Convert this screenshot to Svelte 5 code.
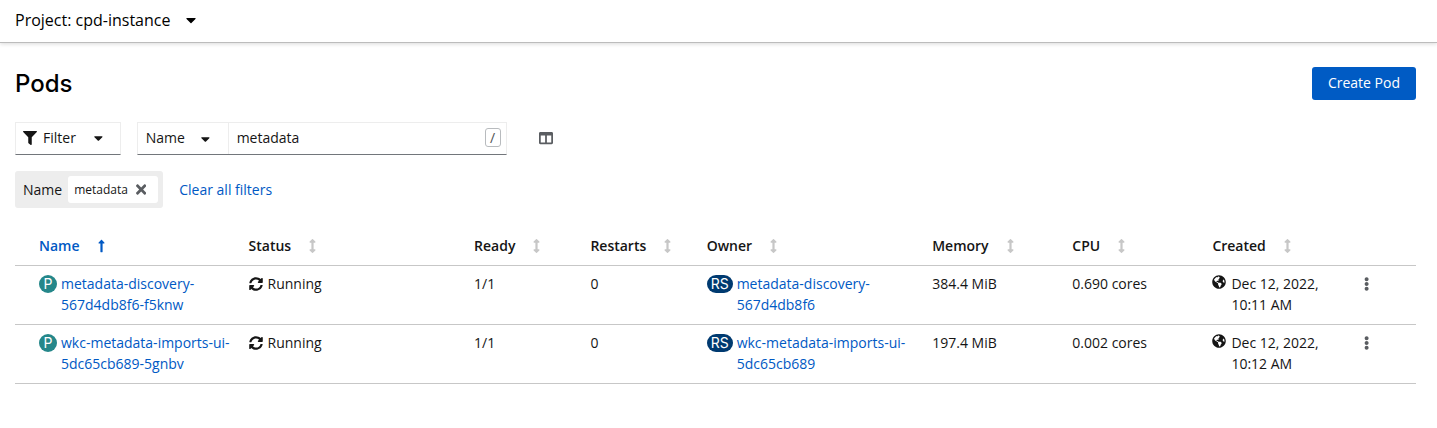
<script>
  const icons = {
    caret: [320, 'M31.3 192h257.3c17.8 0 26.7 21.5 14.1 34.1L174.1 354.8c-7.8 7.8-20.5 7.8-28.3 0L17.2 226.1C4.6 213.5 13.5 192 31.3 192z'],
    filter: [512, 'M487.976 0H24.028C2.71 0-8.047 25.866 7.058 40.971L192 225.941V432c0 7.831 3.821 15.17 10.237 19.662l80 55.98C298.02 518.69 320 507.493 320 487.98V225.941l184.947-184.97C520.021 25.896 509.338 0 487.976 0z'],
    times: [352, 'M242.72 256l100.07-100.07c12.28-12.28 12.28-32.19 0-44.48l-22.24-22.24c-12.28-12.28-32.19-12.28-44.48 0L176 189.28 75.93 89.21c-12.28-12.28-32.19-12.28-44.48 0L9.21 111.45c-12.28 12.28-12.28 32.19 0 44.48L109.28 256 9.21 356.07c-12.28 12.28-12.28 32.19 0 44.48l22.24 22.24c12.28 12.28 32.2 12.28 44.48 0L176 322.72l100.07 100.07c12.28 12.28 32.2 12.28 44.48 0l22.24-22.24c12.28-12.28 12.28-32.19 0-44.48L242.72 256z'],
    kebab: [192, 'M96 184c39.8 0 72 32.2 72 72s-32.2 72-72 72-72-32.2-72-72 32.2-72 72-72zM24 80c0 39.8 32.2 72 72 72s72-32.2 72-72S135.8 8 96 8 24 40.2 24 80zm0 352c0 39.8 32.2 72 72 72s72-32.2 72-72-32.2-72-72-72-72 32.2-72 72z'],
    columns: [512, 'M464 32H48C21.49 32 0 53.49 0 80v352c0 26.51 21.49 48 48 48h416c26.51 0 48-21.49 48-48V80c0-26.51-21.49-48-48-48zM224 416H64V160h160v256zm224 0H288V160h160v256z'],
    up: [256, 'M88 166.059V468c0 6.627 5.373 12 12 12h56c6.627 0 12-5.373 12-12V166.059h46.059c21.382 0 32.09-25.851 16.971-40.971l-86.059-86.059c-9.373-9.373-24.569-9.373-33.941 0l-86.059 86.059c-15.119 15.119-4.411 40.971 16.971 40.971H88z'],
    both: [256, 'M214.059 377.941H168V134.059h46.059c21.382 0 32.09-25.851 16.971-40.971L144.971 7.029c-9.373-9.373-24.568-9.373-33.941 0L24.971 93.088c-15.119 15.119-4.411 40.971 16.971 40.971H88v243.882H41.941c-21.382 0-32.09 25.851-16.971 40.971l86.059 86.059c9.373 9.373 24.568 9.373 33.941 0l86.059-86.059c15.12-15.119 4.412-40.971-16.97-40.971z'],
    sync: [512, 'M370.72 133.28C339.458 104.008 298.888 87.962 255.848 88c-77.458.068-144.328 53.178-162.791 126.85-1.344 5.363-6.122 9.15-11.651 9.15H24.103c-7.498 0-13.194-6.807-11.807-14.176C33.933 94.924 134.813 8 256 8c66.448 0 126.791 26.136 171.315 68.685L463.03 40.97C478.149 25.851 504 36.559 504 57.941V192c0 13.255-10.745 24-24 24H345.941c-21.382 0-32.09-25.851-16.971-40.971l41.75-41.749zM32 296h134.059c21.382 0 32.09 25.851 16.971 40.971l-41.75 41.75c31.262 29.273 71.835 45.319 114.876 45.28 77.418-.07 144.315-53.144 162.787-126.849 1.344-5.363 6.122-9.15 11.651-9.15h57.304c7.498 0 13.194 6.807 11.807 14.176C478.067 417.076 377.187 504 256 504c-66.448 0-126.791-26.136-171.315-68.685L48.97 471.03C33.851 486.149 8 475.441 8 454.059V320c0-13.255 10.745-24 24-24z'],
    globe: [496, 'M248 8C111.03 8 0 119.03 0 256s111.03 248 248 248 248-111.03 248-248S384.97 8 248 8zm82.29 357.6c-3.9 3.88-7.99 7.95-11.31 11.28-2.99 3-5.1 6.7-6.17 10.71-1.51 5.66-2.73 11.38-4.77 16.87l-17.39 46.85c-13.76 3-28 4.69-42.65 4.69v-27.38c1.69-12.62-7.64-36.26-22.63-51.25-6-6-9.37-14.14-9.37-22.63v-32.01c0-11.64-6.27-22.34-16.46-27.97-14.37-7.95-34.81-19.06-48.81-26.11-11.48-5.78-22.1-13.14-31.65-21.75l-.8-.72a114.792 114.792 0 0 1-18.06-20.74c-9.38-13.77-24.66-36.42-34.59-51.14 20.47-45.5 57.36-82.04 103.2-101.89l24.01 12.01C203.48 89.74 216 82.01 216 70.11v-11.3c7.99-1.29 16.12-2.11 24.39-2.42l28.3 28.3c6.25 6.25 6.25 16.38 0 22.63L264 112l-10.34 10.34c-3.12 3.12-3.12 8.19 0 11.31l4.69 4.69c3.12 3.12 3.12 8.19 0 11.31l-8 8a8.008 8.008 0 0 1-5.66 2.34h-8.99c-2.08 0-4.08.81-5.58 2.27l-9.92 9.65a8.008 8.008 0 0 0-1.58 9.31l15.59 31.19c2.66 5.32-1.21 11.58-7.15 11.58h-5.64c-1.93 0-3.79-.7-5.24-1.96l-9.28-8.06a16.017 16.017 0 0 0-15.55-3.1l-31.17 10.39a11.95 11.95 0 0 0-8.17 11.34c0 4.53 2.56 8.66 6.61 10.69l11.08 5.54c9.41 4.71 19.79 7.16 30.31 7.16s22.59 27.29 32 32h66.75c8.49 0 16.62 3.37 22.63 9.37l13.69 13.69a30.503 30.503 0 0 1 8.93 21.57 46.536 46.536 0 0 1-13.72 32.98zM417 274.25c-5.79-1.45-10.84-5-14.15-9.97l-17.98-26.97a23.97 23.97 0 0 1 0-26.62l19.59-29.38c2.32-3.47 5.5-6.29 9.24-8.15l12.98-6.49C440.2 193.59 448 223.87 448 256c0 8.67-.74 17.16-1.82 25.54L417 274.25z'],
  };

  const columns = [
    { label: 'Name', size: 'wide' },
    { label: 'Status', size: 'wide' },
    { label: 'Ready', size: 'narrow' },
    { label: 'Restarts', size: 'narrow' },
    { label: 'Owner', size: 'wide' },
    { label: 'Memory', size: 'medium' },
    { label: 'CPU', size: 'medium' },
    { label: 'Created', size: 'medium' },
  ];

  const pods = [
    { name: ['metadata-discovery-', '567d4db8f6-f5knw'], owner: ['metadata-discovery-', '567d4db8f6'], memory: '384.4 MiB', cpu: '0.690 cores', created: ['Dec 12, 2022,', '10:11 AM'] },
    { name: ['wkc-metadata-imports-ui-', '5dc65cb689-5gnbv'], owner: ['wkc-metadata-imports-ui-', '5dc65cb689'], memory: '197.4 MiB', cpu: '0.002 cores', created: ['Dec 12, 2022,', '10:12 AM'] },
  ];

  let search = $state('metadata');
</script>

{#snippet icon(name)}
  <svg class="icon {name}" viewBox="0 0 {icons[name][0]} 512" aria-hidden="true"><path d={icons[name][1]} /></svg>
{/snippet}

<header class="project-bar">
  <button class="project">Project: cpd-instance {@render icon('caret')}</button>
</header>

<main>
  <div class="title-row">
    <h1>Pods</h1>
    <button class="primary">Create Pod</button>
  </div>

  <div class="toolbar">
    <button class="field filter-toggle">{@render icon('filter')}<span>Filter</span>{@render icon('caret')}</button>
    <div class="search-group">
      <div class="attribute">
        <select aria-label="Filter attribute"><option>Name</option></select>
        {@render icon('caret')}
      </div>
      <div class="search">
        <input type="text" aria-label="Search by name" bind:value={search} />
        <kbd>/</kbd>
      </div>
    </div>
    <button class="plain manage" aria-label="Manage columns">{@render icon('columns')}</button>
  </div>

  <div class="chips">
    <div class="chip-group">
      <span>Name</span>
      <span class="chip">metadata <button class="plain" aria-label="Remove metadata">{@render icon('times')}</button></span>
    </div>
    <button class="plain link">Clear all filters</button>
  </div>

  <table>
    <colgroup>
      {#each columns as c}<col class={c.size} />{/each}
      <col />
    </colgroup>
    <thead>
      <tr>
        {#each columns as c, i}
          <th scope="col" aria-sort={i === 0 ? 'ascending' : undefined}>
            <button class="plain sort" class:active={i === 0}>{c.label} {@render icon(i === 0 ? 'up' : 'both')}</button>
          </th>
        {/each}
        <td></td>
      </tr>
    </thead>
    <tbody>
      {#each pods as pod}
        <tr>
          <td><div class="item"><span class="badge pod">P</span><a href="#pod"><span>{pod.name[0]}</span><wbr /><span>{pod.name[1]}</span></a></div></td>
          <td><div class="item status">{@render icon('sync')}<span>Running</span></div></td>
          <td>1/1</td>
          <td>0</td>
          <td><div class="item"><span class="badge replica">RS</span><a href="#owner"><span>{pod.owner[0]}</span><wbr /><span>{pod.owner[1]}</span></a></div></td>
          <td>{pod.memory}</td>
          <td>{pod.cpu}</td>
          <td><div class="item created">{@render icon('globe')}<span>{pod.created[0]}<br />{pod.created[1]}</span></div></td>
          <td><button class="plain menu" aria-label="Actions">{@render icon('kebab')}</button></td>
        </tr>
      {/each}
    </tbody>
  </table>
</main>

<style>
  :global(body) {
    background: #fff;
    color: #151515;
    font: 14px/21px "Open Sans", sans-serif;
  }
  button, input, select {
    font: inherit;
    color: inherit;
    margin: 0;
  }
  button { cursor: pointer; }
  .icon {
    height: 14px;
    flex: none;
    fill: currentColor;
  }
  .plain {
    display: inline-flex;
    align-items: center;
    padding: 0;
    border: 0;
    background: none;
  }
  .project-bar {
    padding: 0 15px;
    border-bottom: 1px solid #bcbcbc;
    box-shadow: 0 1px 4px #00000026;
  }
  .project {
    display: flex;
    align-items: center;
    gap: 16px;
    padding: 8px 0 10px;
    border: 0;
    background: none;
    color: #000;
    font-size: 16px;
    line-height: 24px;
  }
  .project .icon { height: 16px; }
  main { padding: 24px 21px 24px 15px; }
  .title-row {
    display: flex;
    align-items: center;
    justify-content: space-between;
    margin-bottom: 22px;
  }
  h1 {
    margin: 0;
    color: #000;
    font: 500 24px/33px Inter, sans-serif;
  }
  .primary {
    padding: 5px 16px 7px;
    border: 0;
    border-radius: 3px;
    background: #005bc4;
    color: #fff;
  }
  .toolbar {
    display: flex;
    align-items: center;
    gap: 16px;
    margin-bottom: 16px;
  }
  .field, .search-group {
    border: 1px solid #ededed;
    border-bottom-color: #72767b;
    background: #fff;
  }
  .filter-toggle {
    display: flex;
    align-items: center;
    gap: 6px;
    padding: 4px 17px 6px 7px;
  }
  .filter-toggle .caret { margin-left: 12px; }
  .search-group {
    display: flex;
    flex: 0 1 368px;
    height: 31px;
  }
  .attribute {
    display: flex;
    align-items: center;
    position: relative;
    border-right: 1px solid #ededed;
  }
  .attribute .caret {
    position: absolute;
    right: 18px;
    pointer-events: none;
  }
  select {
    appearance: none;
    width: 90px;
    height: 31px;
    padding: 0 8px 2px;
    border: 0;
    background: none;
  }
  .search {
    display: flex;
    flex: 1;
    align-items: center;
    padding: 0 5px 2px 8px;
  }
  input {
    flex: 1;
    min-width: 0;
    padding: 0;
    border: 0;
    outline: 0;
    background: none;
  }
  kbd {
    width: 14px;
    border: 1px solid #b8bbbe;
    border-radius: 3px;
    color: #4f5255;
    font: 14px/17px "Open Sans", sans-serif;
    text-align: center;
  }
  .manage {
    margin-left: 16px;
    padding-bottom: 2px;
    color: #5a5d61;
  }
  .chips {
    display: flex;
    align-items: center;
    gap: 16px;
    margin-bottom: 19px;
  }
  .chip-group {
    display: flex;
    align-items: center;
    gap: 6px;
    padding: 5px 5px 5px 8px;
    border-radius: 3px;
    background: #ededed;
  }
  .chip {
    display: flex;
    align-items: center;
    gap: 8px;
    padding: 3px 12px 3px 6px;
    border-radius: 3px;
    background: #fff;
    font-size: 12px;
  }
  .chip .icon { height: 15px; color: #5a5d61; }
  .link, a {
    color: #0059c4;
    text-decoration: none;
  }
  a span { white-space: nowrap; }
  table {
    width: 100%;
    table-layout: fixed;
    border-collapse: collapse;
  }
  .wide { width: 16.1%; }
  .narrow { width: 8.3%; }
  .medium { width: 10%; }
  tr { border-bottom: 1px solid #c7c7c7; }
  th, td {
    padding: 7px 8px 9px;
    text-align: left;
    vertical-align: top;
  }
  th { padding: 8px 8px 9px; }
  th:first-child, td:first-child { padding-left: 24px; }
  .sort {
    gap: 18px;
    font-weight: 600;
  }
  .sort .icon { color: #c7c7c7; }
  .sort.active, .sort.active .icon { color: #0059c4; }
  .item {
    display: flex;
    align-items: flex-start;
    gap: 4px;
  }
  .badge {
    flex: none;
    box-sizing: border-box;
    height: 18px;
    min-width: 18px;
    padding: 0 4px;
    margin-top: 2px;
    border-radius: 9px;
    color: #fff;
    font: 14px/18px Inter, sans-serif;
    text-align: center;
  }
  .pod { background: #25878a; }
  .replica { background: #003a70; }
  .status { align-items: center; gap: 5px; }
  .created { gap: 5px; white-space: nowrap; }
  .created .icon { width: 14px; margin-top: 2px; }
  .menu {
    height: 21px;
    padding: 0 12px;
    color: #5a5d61;
  }
</style>
